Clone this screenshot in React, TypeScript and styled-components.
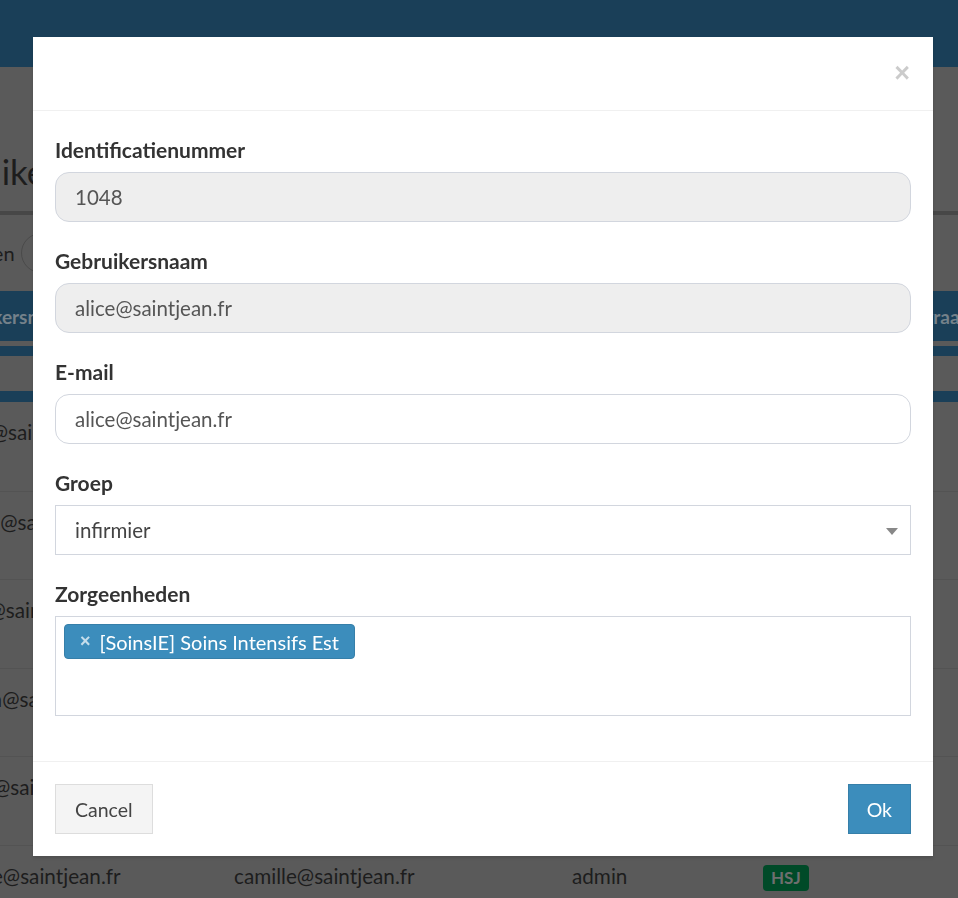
import React from 'react'
import styled, { createGlobalStyle } from 'styled-components'

const GlobalStyle = createGlobalStyle`
  html, body {
    margin: 0;
    padding: 0;
  }
  body {
    background: #5a5a5a;
    font-family: Lato, "Liberation Sans", sans-serif;
    overflow: hidden;
  }
  * {
    box-sizing: border-box;
  }
`

// page behind the dialog (already dimmed by the backdrop)
const Page = styled.div`
  width: 958px;
  height: 898px;
  overflow: hidden;
  background: #5a5a5a;
`

const TopBar = styled.header`
  height: 67px;
  background: #1a3f58;
`

const Content = styled.main`
  margin-left: -60px;
  width: 1300px;
`

const Title = styled.h1`
  margin: 0 0 0 -34px;
  height: 144px;
  padding-top: 82px;
  font-size: 35px;
  font-weight: 400;
  line-height: 44px;
  color: #1d1d1d;
`

const Divider = styled.div`
  height: 4px;
  background: #474747;
`

const Controls = styled.div`
  display: flex;
  align-items: center;
  gap: 6px;
  height: 76px;
  padding-left: 21px;
  font-size: 20px;
  color: #1d1d1d;
`

const LengthSelect = styled.div`
  width: 70px;
  height: 40px;
  border: 1px solid #4a4a4a;
  border-radius: 20px;
`

const HeadRow = styled.div`
  display: grid;
  grid-template-columns: 294px 338px 191px 127px 200px;
  height: 50px;
  align-items: center;
  background: #1a3f58;
  font-weight: 700;
  font-size: 19px;
  color: #74818a;
`

const HeadCell = styled.div<{ $shift?: number }>`
  margin-left: ${p => p.$shift ?? 0}px;
  white-space: nowrap;
`

const Stripe = styled.div<{ $h: number; $gap: number }>`
  height: ${p => p.$h}px;
  margin-top: ${p => p.$gap}px;
  background: #1a3f58;
`

const Row = styled.div`
  display: grid;
  grid-template-columns: 294px 338px 191px 127px 200px;
  height: 88.5px;
  padding-top: 18px;
  border-top: 1px solid #535353;
  font-size: 20.7px;
  line-height: 24px;
  color: #1d1d1d;
  &:first-child {
    border-top: 0;
  }
`

const Cell = styled.div`
  white-space: nowrap;
`

const Badge = styled.span`
  display: inline-block;
  padding: 3px 8px;
  border-radius: 4px;
  background: #004a28;
  color: #6e6e6e;
  font-weight: 700;
  font-size: 17px;
  line-height: 20px;
`

// dialog
const Backdrop = styled.div`
  position: fixed;
  inset: 0;
  display: flex;
  justify-content: center;
  align-items: flex-start;
  padding: 37px 0 0 8px;
`

const Dialog = styled.div`
  width: 900px;
  background: #fff;
  box-shadow: 0 2px 3px rgba(0, 0, 0, 0.125);
`

const DialogHeader = styled.div`
  height: 74px;
  border-bottom: 1px solid #f0f0f0;
  display: flex;
  justify-content: flex-end;
  align-items: center;
  padding: 0 23px 0 22px;
`

const CloseButton = styled.button`
  background: none;
  border: 0;
  padding: 0;
  font-family: "Liberation Sans", Arial, sans-serif;
  font-size: 27px;
  font-weight: 700;
  line-height: 1;
  color: #000;
  opacity: 0.2;
  cursor: pointer;
`

const DialogBody = styled.div`
  padding: 26px 22px 19px;
`

const FormGroup = styled.div`
  margin-bottom: 26px;
`

const Label = styled.label`
  display: block;
  font-size: 21px;
  font-weight: 700;
  line-height: 26px;
  color: #333;
  margin-bottom: 9px;
`

const Input = styled.input<{ $readOnlyLook?: boolean }>`
  display: block;
  width: 100%;
  height: 50px;
  padding: 0 19px;
  border: 1px solid #d2d6de;
  border-radius: 14px;
  background: ${p => (p.$readOnlyLook ? '#eeeeee' : '#ffffff')};
  font-family: inherit;
  font-size: 20.5px;
  color: #555;
  outline: none;
`

const SelectBox = styled.div`
  position: relative;
  display: flex;
  align-items: center;
  height: 50px;
  padding: 0 19px;
  border: 1px solid #d2d6de;
  font-size: 20.5px;
  color: #444;
`

const Caret = styled.span`
  position: absolute;
  right: 12px;
  top: 22px;
  width: 0;
  height: 0;
  border-left: 6px solid transparent;
  border-right: 6px solid transparent;
  border-top: 7px solid #888;
`

const TagBox = styled.div`
  display: flex;
  flex-wrap: wrap;
  align-items: flex-start;
  gap: 6px;
  height: 100px;
  padding: 7px 8px;
  border: 1px solid #d2d6de;
`

const Tag = styled.span`
  display: inline-flex;
  align-items: center;
  gap: 9px;
  height: 35px;
  padding: 0 15px;
  border: 1px solid #367fa9;
  border-radius: 4px;
  background: #3c8dbc;
  color: #fff;
  font-size: 20px;
`

const TagRemove = styled.span`
  color: rgba(255, 255, 255, 0.7);
  font-family: "Liberation Sans", Arial, sans-serif;
  font-weight: 700;
  font-size: 18px;
`

const DialogFooter = styled.div`
  display: flex;
  justify-content: space-between;
  padding: 22px;
  border-top: 1px solid #f0f0f0;
`

const Button = styled.button<{ $primary?: boolean }>`
  height: 50px;
  padding: 0 ${p => (p.$primary ? 18 : 19)}px;
  border: 1px solid ${p => (p.$primary ? '#367fa9' : '#dddddd')};
  background: ${p => (p.$primary ? '#3c8dbc' : '#f4f4f4')};
  color: ${p => (p.$primary ? '#ffffff' : '#444444')};
  font-family: inherit;
  font-size: 19.5px;
  cursor: pointer;
`

const users = [
  { name: 'marie', group: 'infirmier' },
  { name: 'jeanne', group: 'infirmier' },
  { name: 'sarah', group: 'medecin' },
  { name: 'manon', group: 'infirmier' },
  { name: 'pierre', group: 'medecin' },
  { name: 'camille', group: 'admin' },
]

export default function App() {
  return (
    <>
      <GlobalStyle />
      <Page>
        <TopBar />
        <Content>
          <Title>Gebruikers</Title>
          <Divider />
          <Controls>
            <span>Tonen</span>
            <LengthSelect />
          </Controls>
          <HeadRow>
            <HeadCell $shift={-5}>Gebruikersnaam</HeadCell>
            <HeadCell>E-mail</HeadCell>
            <HeadCell>Groep</HeadCell>
            <HeadCell>Site</HeadCell>
            <HeadCell>Aanvraag</HeadCell>
          </HeadRow>
          <Stripe $h={10} $gap={5} />
          <Stripe $h={11} $gap={35} />
          <div>
            {users.map(u => (
              <Row key={u.name}>
                <Cell>{u.name}@saintjean.fr</Cell>
                <Cell>{u.name}@saintjean.fr</Cell>
                <Cell>{u.group}</Cell>
                <Cell>
                  <Badge>HSJ</Badge>
                </Cell>
                <Cell />
              </Row>
            ))}
          </div>
        </Content>
      </Page>

      <Backdrop>
        <Dialog>
          <DialogHeader>
            <CloseButton aria-label="Sluiten">×</CloseButton>
          </DialogHeader>
          <DialogBody>
            <FormGroup>
              <Label>Identificatienummer</Label>
              <Input $readOnlyLook readOnly value="1048" />
            </FormGroup>
            <FormGroup>
              <Label>Gebruikersnaam</Label>
              <Input $readOnlyLook readOnly value="alice@saintjean.fr" />
            </FormGroup>
            <FormGroup>
              <Label>E-mail</Label>
              <Input defaultValue="alice@saintjean.fr" />
            </FormGroup>
            <FormGroup>
              <Label>Groep</Label>
              <SelectBox>
                infirmier
                <Caret />
              </SelectBox>
            </FormGroup>
            <FormGroup>
              <Label>Zorgeenheden</Label>
              <TagBox>
                <Tag>
                  <TagRemove>×</TagRemove>
                  [SoinsIE] Soins Intensifs Est
                </Tag>
              </TagBox>
            </FormGroup>
          </DialogBody>
          <DialogFooter>
            <Button>Cancel</Button>
            <Button $primary>Ok</Button>
          </DialogFooter>
        </Dialog>
      </Backdrop>
    </>
  )
}
